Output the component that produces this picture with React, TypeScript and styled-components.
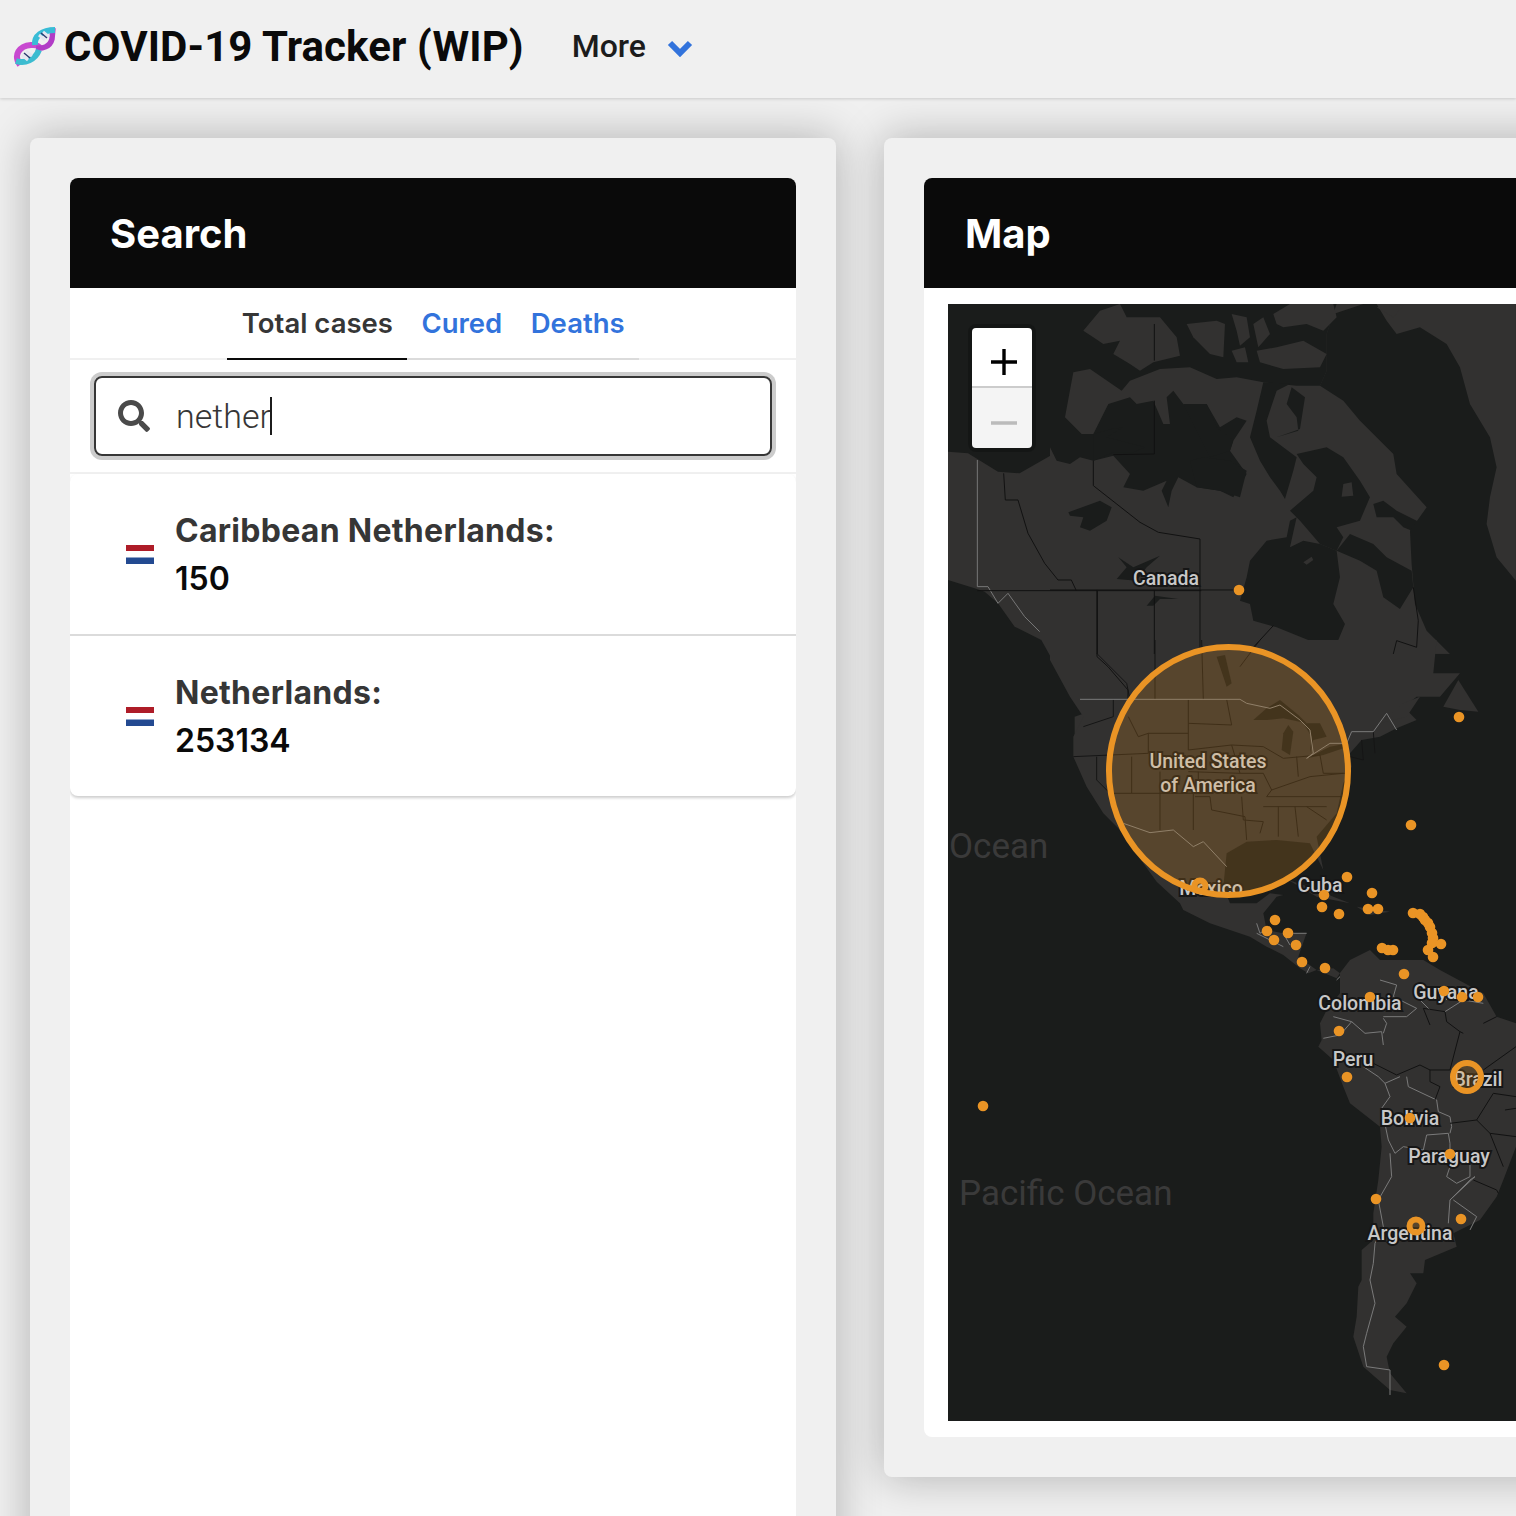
import React from 'react'
import styled, {createGlobalStyle} from 'styled-components'
import {FaSearch} from 'react-icons/fa'

const GlobalStyle = createGlobalStyle`
  html, body {
    margin: 0;
    padding: 0;
    height: 1516px;
    overflow: hidden;
    background: #f0f0f0;
    font-family: Inter, "Noto Sans", sans-serif;
    color: #363636;
  }
  * { box-sizing: border-box; }
`

const Navbar = styled.nav`
  height: 98px;
  display: flex;
  align-items: center;
  padding: 0 0 6px 12px;
  background: #f0f0f0;
  box-shadow: 0 1px 3px rgba(10, 10, 10, 0.16);
  position: relative;
`

const Brand = styled.div`
  font-family: Roboto, sans-serif;
  font-size: 42px;
  font-weight: 700;
  color: #0a0a0a;
  margin-left: 8px;
  white-space: nowrap;
  letter-spacing: 0.1px;
`

const NavItem = styled.div`
  display: flex;
  align-items: center;
  gap: 21px;
  margin-left: 48px;
  font-family: Roboto, sans-serif;
  font-size: 32px;
  font-weight: 500;
  color: #1c1c1c;
`

const NavArrow = styled.svg`
  width: 26px;
  height: 18px;
  margin-top: 4px;
  color: #3273dc;
`

const Columns = styled.main`
  display: grid;
  grid-template-columns: 806px 806px;
  column-gap: 48px;
  align-items: start;
  padding: 40px 0 0 30px;
`

const Card = styled.section<{$tall?: boolean}>`
  background: #f0f0f0;
  border-radius: 8px;
  padding: 40px;
  box-shadow: 0 0 44px rgba(10, 10, 10, 0.28);
  height: ${(props) => (props.$tall ? '1600px' : '1339px')};
`

const Panel = styled.div`
  background: #fff;
  border-radius: 8px;
  height: 100%;
  overflow: hidden;
`

const PanelHeading = styled.h2<{$indent: number}>`
  margin: 0;
  height: 110px;
  display: flex;
  align-items: center;
  padding-left: ${(props) => props.$indent}px;
  background: #0a0a0a;
  color: #fff;
  font-size: 40px;
  font-weight: 700;
`

const TabRow = styled.div`
  height: 72px;
  display: flex;
  justify-content: center;
  border-bottom: 2px solid #f0f0f0;
`

const TabList = styled.div`
  display: flex;
  height: 72px;
  border-bottom: 2px solid #dbdbdb;
`

const Tab = styled.a<{$active?: boolean}>`
  display: flex;
  align-items: center;
  padding: 0 14px 0 14.5px;
  height: 72px;
  font-size: 27.5px;
  font-weight: 600;
  color: ${(props) => (props.$active ? '#363636' : '#3273dc')};
  border-bottom: 2px solid ${(props) => (props.$active ? '#0a0a0a' : 'transparent')};
`

const SearchRow = styled.div`
  padding: 16px 24px;
  border-bottom: 2px solid #f0f0f0;
`

const SearchBox = styled.div`
  height: 80px;
  display: flex;
  align-items: center;
  padding-left: 22px;
  gap: 26px;
  border: 2px solid #363636;
  border-radius: 8px;
  box-shadow: 0 0 0 4px #cccccc;
  font-family: Roboto, sans-serif;
  font-size: 34px;
  font-weight: 300;
  color: #363636;
  svg {
    width: 32px;
    height: 32px;
    color: #4a4a4a;
  }
`

const Caret = styled.span`
  display: inline-block;
  width: 2px;
  height: 38px;
  background: #1c1c1c;
  vertical-align: -7px;
  margin-left: -1px;
`

const ResultList = styled.ul`
  margin: 0;
  padding: 0;
  list-style: none;
  border-radius: 8px;
  box-shadow: 0 2px 3px rgba(10, 10, 10, 0.2);
`

const ResultItem = styled.li`
  height: 160px;
  display: flex;
  align-items: center;
  gap: 21px;
  padding-left: 56px;
  & + & {
    height: 162px;
    border-top: 2px solid #dbdbdb;
  }
`

const Flag = styled.svg`
  width: 28px;
  height: 19px;
  flex: none;
`

const ResultText = styled.div`
  font-size: 32px;
  font-weight: 700;
  line-height: 48px;
  letter-spacing: 0.28px;
  padding-top: 2px;
`

const ResultCount = styled.div`
  color: #0a0a0a;
  font-weight: 600;
  letter-spacing: 0;
`

const MapBody = styled.div`
  padding: 16px 0 16px 24px;
`

const MapFrame = styled.div`
  position: relative;
  width: 702px;
  height: 1117px;
  background: #1a1c1b;
  overflow: hidden;
`

const MapCanvas = styled.svg`
  display: block;
`

const ZoomControl = styled.div`
  position: absolute;
  left: 24px;
  top: 24px;
  width: 60px;
  border-radius: 4px;
  overflow: hidden;
  box-shadow: 0 0 0 4px rgba(0, 0, 0, 0.2);
`

const ZoomButton = styled.div<{$disabled?: boolean}>`
  height: ${(props) => (props.$disabled ? 62 : 58)}px;
  display: flex;
  align-items: center;
  justify-content: center;
  padding: 10px 0 0 4px;
  background: ${(props) => (props.$disabled ? '#f4f4f4' : '#fff')};
  color: ${(props) => (props.$disabled ? '#bbb' : '#000')};
  border-top: ${(props) => (props.$disabled ? '2px solid #ccc' : 'none')};
  svg {
    width: 26px;
    height: 26px;
  }
`

const DnaIcon = () => (
  <svg width="44" height="44" viewBox="11 13 44 44" fill="none" strokeLinecap="butt">
    <path d="M19 54C12 44 18 35 30 34c6-.5 8 1 9 3" stroke="#c849d0" strokeWidth="6" />
    <path d="M35 37c6 1 14-1 16-9l1-11" stroke="#b13cc6" strokeWidth="5.5" />
    <path d="M15 50c9 3 19-1 23-11" stroke="#3cbcd0" strokeWidth="6" />
    <path d="M34 34c-1-9 7-15 20-15" stroke="#38bcd6" strokeWidth="6" />
    <path d="M21 44l6 5M25 40l6 5M38 24l6 5M42 21l6 5" stroke="#e6e6f0" strokeWidth="3" />
    <path d="M23 42l6 5M40 22l6 5" stroke="#2d3b70" strokeWidth="1.5" />
  </svg>
)

const NetherlandsFlag = () => (
  <Flag viewBox="0 0 28 19">
    <rect width="28" height="6" fill="#ae1c28" />
    <rect y="6" width="28" height="6.5" fill="#fff" />
    <rect y="12.5" width="28" height="6.5" fill="#234a91" />
  </Flag>
)

const LAND = '#323130'
const WATER = '#1a1c1b'
const ORANGE = '#ea9425'

// traced in crop coordinates, so each group has its own transform
const WEST_LAND =
  'M0,35L60,40L150,95L215,100L320,40L340,70L430,65L460,-136L900,-136L900,900L380,900L380,830L410,820L400,790L330,690L280,600L200,560L150,490L110,455L80,445L0,420Z'

const WEST_GREY = 'M88,60L88,440L120,440L150,490L180,460L230,530L275,575'

const WEST_DARK = [
  'M167,100L172,180L210,180L240,280L290,370L330,420L370,420L385,452',
  'M447,452L447,650L480,680L540,750L540,775',
  'M88,452L760,452',
]

const NORTH_WATER = [
  'M0,0L0,430L20,470L60,480L90,460L130,470L190,455L240,510L220,550L280,560L350,530L335,560L355,610L365,560L385,520L440,550L510,560L550,580L590,510L540,440L550,410L590,350L560,340L510,370L470,300L430,330L400,300L370,260L350,280L360,360L340,360L310,290L260,300L240,280L175,300L130,390L95,390L45,340L70,205L120,195L215,260L240,230L330,195L420,190L500,225L560,220L640,235L690,240L740,245L810,245L830,200L830,90L850,30L860,0Z',
  'M130,390L185,375L220,370L170,400L285,430L250,445L190,445L130,470Z',
  'M640,235L620,320L600,400L630,470L660,520L690,560L705,585L730,500L740,460L700,430L660,400L650,350L680,260L720,240Z',
  'M725,250L710,300L740,340L745,380L680,400L750,375L765,280Z',
  'M400,300L440,380L480,460L540,440L550,410L500,370L470,300Z',
  'M420,470L460,460L540,470L590,500L570,580L510,560L440,550Z',
  'M740,450L830,430L880,460L930,530L960,580L930,650L860,670L880,700L860,740L810,720L750,650L720,620L790,560L800,520L760,480Z',
  'M600,770L650,710L710,700L720,650L740,640L720,730L760,710L810,720L860,740L870,820L850,900L885,960L860,1020L830,1050L790,1050L780,1010L680,970L610,950L600,900L570,890L590,820Z',
  'M860,740L900,690L970,720L1010,760L1085,800L1090,850L1050,915L1000,880L980,800L930,770Z',
  'M970,600L1000,590L1040,620L1100,650L1110,690L1060,670L1030,640L980,640Z',
  'M830,90L850,30L940,0L980,0L1010,50L1040,90L1110,70L1190,120L1230,190L1260,300L1320,400L1340,490L1320,580L1310,660L1340,760L1398,830L1398,1050L1200,1050L1130,980L1095,900L1085,780L1080,680L1130,610L1040,510L1030,450L930,350L880,290L810,245L830,200Z',
]

const NORTH_ISLANDS = [
  'M100,80L150,20L210,0L230,40L300,40L330,40L380,100L390,155L310,175L270,200L240,180L190,150L210,110L160,120L130,100Z',
  'M410,60L500,50L525,60L520,160L480,150L430,100Z',
  'M545,30L590,40L600,100L570,125L560,80Z',
  'M545,140L585,130L595,175L560,175Z',
  'M620,140L680,130L760,110L830,150L810,190L700,195L630,175Z',
  'M670,30L720,0L850,0L860,40L820,80L770,60L700,70L680,60Z',
  'M610,60L640,40L660,90L625,130Z',
  'M880,540L905,535L910,575L875,578Z',
  'M760,775L785,758L790,768L770,782Z',
  'M980,10L1060,5L1030,40Z',
]

const NORTH_LAKES = [
  'M55,625L150,590L185,610L170,650L120,680L90,670L100,640L60,635Z',
  'M205,760L250,790L330,755L290,790L260,830L200,825L230,790Z',
  'M290,905L315,875L385,885L330,885L310,905Z',
]

const NORTH_BORDERS = [
  'M313,60L313,170',
  'M313,290L313,450L190,452',
  'M130,470L130,545L270,655L325,685L450,705L450,1050',
  'M0,858L560,858',
  'M142,858L142,1050',
  'M313,858L313,1050',
  'M670,965L610,1030',
  'M1090,850L1105,950L1100,1030L1040,1010L1030,1050',
]

const MAIN_LAND =
  'M0,0L0,60L60,170L100,230L70,290L70,350L110,440L160,520L240,600L280,670L320,725L390,790L400,810L480,850L600,890L650,920L700,945L750,985L775,1000L800,990L860,1015L870,1000L850,985L800,990L745,950L770,878L700,880L650,870L640,820L680,770L700,765L660,760L620,790L540,790L520,740L530,640L590,605L680,600L780,610L800,650L820,690L800,590L860,520L880,430L905,380L900,340L935,300L990,290L1040,265L1100,240L1060,200L1100,170L1170,170L1230,100L1150,100L1160,0Z'

const GREAT_LAKES = [
  'M610,240L650,205L690,180L745,225L770,250L700,235L650,240Z',
  'M695,330L700,280L715,255L730,275L720,345Z',
  'M760,250L810,250L830,290L790,300L780,340L785,290Z',
  'M770,355L840,320L895,310L880,325L820,345Z',
  'M500,50L525,45L545,130L530,140Z',
]

const STATE_LINES = [
  'M415,178L415,250L545,255L530,178',
  'M315,0L315,178',
  'M455,0L460,178',
  'M570,80L630,0',
  'M140,40L230,130L240,178',
  'M235,230L265,290L295,280L295,340L70,350',
  'M295,280L415,280',
  'M415,250L415,330L545,315L640,320L700,355L810,345',
  'M245,350L245,460L180,460',
  'M330,395L330,570',
  'M245,460L430,460L430,570',
  'M435,470L480,470L485,510L585,530L590,600',
  'M575,470L580,540L640,545L630,580',
  'M650,470L880,470',
  'M640,500L830,500',
  'M685,500L685,590',
  'M735,500L745,590',
  'M770,500L830,540',
  'M545,315L570,400L640,400L665,450L650,470',
  'M740,350L745,410',
  'M665,450L780,410L880,400',
  'M810,345L820,400L885,400',
  'M415,395L570,400',
  'M445,395L445,460',
  'M190,178L190,230L100,260',
  'M140,350L140,420L180,460',
  'M935,300L940,360L900,350M970,275L975,340',
]

const COUNTRY_LINES = [
  'M90,178L570,178L590,190L660,205L690,195L750,240L780,270L790,340L770,355L840,310L890,310L905,275L970,275L1010,220L1040,270',
  'M220,550L300,578L370,570L430,620L460,605L530,680',
  'M620,850L630,880L660,860M620,880L700,920M730,880L770,880M700,880L720,915M780,980L770,1000',
  'M860,1020L880,1000',
]

const SOUTH_LAND =
  'M270,-21L300,-60L360,-90L390,-60L420,-60L520,-60L570,-30L700,40L740,110L798,130L900,200L900,420L798,500L760,600L740,650L690,720L610,760L620,800L525,840L520,880L480,880L500,910L470,970L435,1010L470,1040L430,1090L410,1130L420,1180L470,1240L420,1230L340,1160L310,1070L320,1010L325,920L335,900L335,810L370,780L370,700L385,600L395,500L390,440L300,370L280,320L250,240L205,200L215,180L210,130L230,90L270,40Z'

const SOUTH_GREY = [
  'M250,110L305,125L345,160L395,155L400,195M400,115L410,130L400,160',
  'M220,175L270,165L305,125',
  'M340,260L385,290L405,310L450,290',
  'M405,310L420,350L395,385L415,480L435,520L460,500L520,510L530,465L595,460L600,490L600,520L660,550L660,590L620,610L590,590L600,560',
  'M470,290L475,320L560,360L565,395L600,410L605,440L600,460',
  'M420,520L425,590L385,660L400,740L375,790L370,850L360,900L375,970L350,1060L340,1100L350,1160L420,1170L420,1245',
  'M600,660L660,600L675,590L600,660L595,730M610,660L680,710L660,750',
  'M390,0L440,15L430,50L500,85L470,110L400,110',
  'M490,40L540,90',
  'M585,95L640,60L700,70M590,60L580,35',
]

const SOUTH_DARK = [
  'M370,250L440,285L510,255L540,270L600,270L630,155L590,125L585,95L520,85L540,135',
  'M540,270L540,305L570,320L555,360',
  'M640,160L630,155M730,340L680,420L720,460L760,560',
  'M600,430L680,420M720,460L798,470',
  'M700,270L798,200M730,340L798,350M765,390L798,385',
  'M670,600L740,630L745,640M700,130L740,110',
]

const MAP_DOTS: [number, number][] = [
  [1239, 590], [1459, 717], [1411, 825], [983, 1106], [1444, 1365],
  [1347, 877], [1372, 893], [1324, 895], [1322, 907], [1339, 914], [1368, 909], [1378, 909],
  [1413, 913], [1420, 914], [1423, 917], [1425, 920], [1428, 923], [1430, 927], [1432, 933],
  [1433, 938], [1432, 943], [1428, 950], [1433, 957], [1441, 944],
  [1382, 948], [1388, 950], [1393, 950], [1404, 974],
  [1275, 920], [1267, 931], [1274, 940], [1288, 933], [1296, 945], [1302, 962], [1325, 968],
  [1444, 991], [1462, 997], [1478, 997], [1370, 997], [1339, 1031],
  [1347, 1077], [1410, 1118], [1450, 1154], [1376, 1199], [1461, 1219],
]

const MAP_RINGS: [number, number, number, number][] = [
  [1228.5, 771, 119.5, 124],
  [1200, 886, 5.5, 5.5],
  [1467, 1077, 14, 14],
  [1416, 1226, 6.5, 6.5],
]

const MAP_LABELS: [string, number, number][] = [
  ['Canada', 1166, 585],
  ['United States', 1208, 768],
  ['of America', 1208, 792],
  ['Mexico', 1211, 895],
  ['Cuba', 1320, 892],
  ['Colombia', 1360, 1010],
  ['Guyana', 1446, 999],
  ['Peru', 1353, 1066],
  ['Brazil', 1478, 1086],
  ['Bolivia', 1410, 1125],
  ['Paraguay', 1449, 1163],
  ['Argentina', 1410, 1240],
]

const WorldMap = () => (
  <MapCanvas width="702" height="1117" viewBox="948 304 702 1117">
    <rect x="948" y="304" width="702" height="1117" fill={WATER} />
    <g transform="translate(948 440) scale(0.3333)">
      <path d={WEST_LAND} fill={LAND} />
    </g>
    <g transform="translate(1050 304) scale(0.3333)">
      <rect width="1398" height="1050" fill={LAND} />
      {NORTH_WATER.map((d) => <path key={d} d={d} fill={WATER} />)}
      {NORTH_ISLANDS.map((d) => <path key={d} d={d} fill={LAND} />)}
      {NORTH_LAKES.map((d) => <path key={d} d={d} fill={WATER} />)}
    </g>
    <g transform="translate(1050 640) scale(0.3333)">
      <path d={MAIN_LAND} fill={LAND} />
      <path d="M1180,200L1225,120L1285,215L1230,210Z" fill={LAND} />
      <path d="M715,720L790,745L850,770L900,790L800,770Z" fill={LAND} />
      <path d="M920,800L1020,815L960,825Z" fill={LAND} />
      <path d="M990,250L1060,190L1110,170L1070,230Z" fill={LAND} />
      {GREAT_LAKES.map((d) => <path key={d} d={d} fill={WATER} />)}
    </g>
    <g transform="translate(948 440) scale(0.3333)" fill="none">
      <path d={WEST_GREY} stroke="#777" strokeWidth="3" />
      {WEST_DARK.map((d) => <path key={d} d={d} stroke="#111" strokeWidth="3" />)}
    </g>
    <g transform="translate(1050 304) scale(0.3333)" fill="none">
      {NORTH_BORDERS.map((d) => <path key={d} d={d} stroke="#111" strokeWidth="3" />)}
    </g>
    <g transform="translate(1050 640) scale(0.3333)" fill="none">
      {STATE_LINES.map((d) => <path key={d} d={d} stroke="#151515" strokeWidth="3" />)}
      {COUNTRY_LINES.map((d) => <path key={d} d={d} stroke="#7a7a7a" strokeWidth="3" />)}
    </g>
    <g transform="translate(1250 980) scale(0.3333)" fill="none">
      <path d={SOUTH_LAND} fill={LAND} />
      {SOUTH_GREY.map((d) => <path key={d} d={d} stroke="#7a7a7a" strokeWidth="3" />)}
      {SOUTH_DARK.map((d) => <path key={d} d={d} stroke="#111" strokeWidth="3" />)}
    </g>
    <text x="949" y="858" fontFamily="Roboto, sans-serif" fontSize="35" fill="#3a3a3a">Ocean</text>
    <text x="959" y="1205" fontFamily="Roboto, sans-serif" fontSize="35" fill="#3a3a3a">Pacific Ocean</text>
    {MAP_LABELS.map(([label, x, y]) => (
      <text
        key={label}
        x={x}
        y={y}
        textAnchor="middle"
        fontFamily="Roboto, sans-serif"
        fontSize="19.5"
        fontWeight="500"
        fill="#c8c8c8"
        stroke="#161616"
        strokeWidth="4"
        paintOrder="stroke"
      >
        {label}
      </text>
    ))}
    {MAP_RINGS.map(([x, y, rx, ry]) => (
      <ellipse key={x} cx={x} cy={y} rx={rx} ry={ry} fill={ORANGE} fillOpacity="0.2" stroke={ORANGE} strokeWidth="6" />
    ))}
    {MAP_DOTS.map(([x, y]) => (
      <circle key={`${x}-${y}`} cx={x} cy={y} r="5.3" fill={ORANGE} />
    ))}
  </MapCanvas>
)

const results = [
  {name: 'Caribbean Netherlands', count: 150},
  {name: 'Netherlands', count: 253134},
]

export default function App() {
  return (
    <>
      <GlobalStyle />
      <Navbar>
        <DnaIcon />
        <Brand>COVID-19 Tracker (WIP)</Brand>
        <NavItem>
          More
          <NavArrow viewBox="0 0 26 18">
            <path d="M3 4l10 10L23 4" fill="none" stroke="currentColor" strokeWidth="6" />
          </NavArrow>
        </NavItem>
      </Navbar>
      <Columns>
        <Card $tall>
          <Panel>
            <PanelHeading $indent={40}>Search</PanelHeading>
            <TabRow>
              <TabList>
                <Tab $active>Total cases</Tab>
                <Tab>Cured</Tab>
                <Tab>Deaths</Tab>
              </TabList>
            </TabRow>
            <SearchRow>
              <SearchBox>
                <FaSearch />
                <span>
                  nether
                  <Caret />
                </span>
              </SearchBox>
            </SearchRow>
            <ResultList>
              {results.map((result) => (
                <ResultItem key={result.name}>
                  <NetherlandsFlag />
                  <ResultText>
                    {result.name}:<ResultCount>{result.count}</ResultCount>
                  </ResultText>
                </ResultItem>
              ))}
            </ResultList>
          </Panel>
        </Card>
        <Card>
          <Panel>
            <PanelHeading $indent={41}>Map</PanelHeading>
            <MapBody>
              <MapFrame>
                <WorldMap />
                <ZoomControl>
                  <ZoomButton>
                    <svg viewBox="0 0 26 26">
                      <path d="M0 13h26M13 0v26" stroke="currentColor" strokeWidth="3.4" />
                    </svg>
                  </ZoomButton>
                  <ZoomButton $disabled>
                    <svg viewBox="0 0 26 26">
                      <path d="M0 13h26" stroke="currentColor" strokeWidth="3.4" />
                    </svg>
                  </ZoomButton>
                </ZoomControl>
              </MapFrame>
            </MapBody>
          </Panel>
        </Card>
      </Columns>
    </>
  )
}
